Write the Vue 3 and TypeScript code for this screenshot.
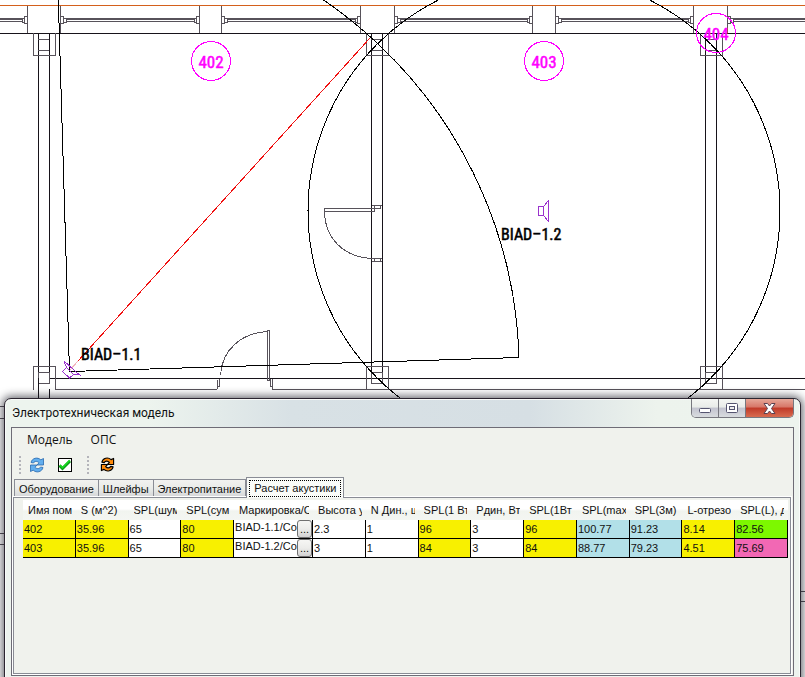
<script setup lang="ts">
import { ref } from 'vue'

type Tone = 'yellow' | 'white' | 'blue' | 'green' | 'pink'
interface Column { title: string; tone: Tone; wide?: boolean }

const menus = ['Модель', 'ОПС']
const tabs = ['Оборудование', 'Шлейфы', 'Электропитание', 'Расчет акустики']
const activeTab = ref(3)

const columns: Column[] = [
  { title: 'Имя пом', tone: 'yellow' },
  { title: 'S (м^2)', tone: 'yellow' },
  { title: 'SPL(шум', tone: 'white' },
  { title: 'SPL(сум', tone: 'yellow' },
  { title: 'Маркировка/С', tone: 'white', wide: true },
  { title: 'Высота у', tone: 'white' },
  { title: 'N Дин., ш', tone: 'white' },
  { title: 'SPL(1 Вт', tone: 'yellow' },
  { title: 'Pдин, Вт', tone: 'white' },
  { title: 'SPL(1Вт', tone: 'yellow' },
  { title: 'SPL(max', tone: 'blue' },
  { title: 'SPL(3м)', tone: 'blue' },
  { title: 'L-отрезо', tone: 'yellow' },
  { title: 'SPL(L), д', tone: 'green' },
]

const rows: string[][] = [
  ['402', '35.96', '65', '80', 'BIAD-1.1/Со', '2.3', '1', '96', '3', '96', '100.77', '91.23', '8.14', '82.56'],
  ['403', '35.96', '65', '80', 'BIAD-1.2/Со', '3', '1', '84', '3', '84', '88.77', '79.23', '4.51', '75.69'],
]

const REQUIRED_LEVEL = 80
function tone(col: number, value: string): Tone {
  if (col === columns.length - 1) return Number(value) >= REQUIRED_LEVEL ? 'green' : 'pink'
  return columns[col].tone
}

/* Floor plan geometry */
const glazing: [number, number][] = [[-112, 27], [60, 199], [221, 360], [394, 532], [555, 693], [727, 866]]
const walls = [38, 371, 705]
const rooms = [
  { name: '402', x: 211, y: 61 },
  { name: '403', x: 544, y: 61 },
  { name: '404', x: 716, y: 33 },
]
</script>

<template>
  <main class="desktop">
    <svg class="plan" viewBox="0 0 805 677" preserveAspectRatio="xMinYMin slice" role="img" aria-label="План помещений">
      <g class="wall-lines">
        <path class="orange" d="M0 5.5H805" />
        <path class="dark" d="M0 33.5H805M49 378.5H805" />
        <path d="M55 389.5H217M272 389.5H805M0 406.5H8M0 418.5H8M0 533.5H8M0 544.5H8M801 591.5H805M801 601.5H805" />
        <g v-for="[a, b] in glazing" :key="a">
          <path :d="`M${a + .5} 6V33M${b + .5} 6V33`" />
          <path class="pane" :d="`M${a + 6} 19H${b - 5}`" />
          <path :d="`M${a + 6} 21.5H${b - 5}M${a + 1} 16.5h2.5v7h-2.5M${a + 4} 18.5h2v4h-2M${b} 16.5h-2.5v7h2.5M${b - 3} 18.5h-2v4h2`" />
        </g>
        <g v-for="x in walls" :key="x">
          <path class="dark" :d="`M${x + .5} 33V378M${x + 11.5} 33V378`" />
          <path :d="`M${x - 4.5} 33V55.5h22V33M${x} 39.5h11M${x} 50.5h11M${x - 4.5} 389.5v-23h22v23M${x + .5} 372.5h11v11h-11z`" />
        </g>
        <path class="dark" d="M38.500 378V400M49.500 389V400" />
        <path d="M324.500 208.500H374.500V211.500H324.500zM372 205.500H382M374.500 205.500V208.500H380.500V205.500M372 258.500H382M374.500 258.500V261.500H380.500V258.500M372 261.500H382M324.500 211.500C325 238 343 257 372 258.500" />
        <path d="M267.500 330.500H269.500V380H267.500zM267.500 331.500C241 333 222 350 220.500 375M217.500 389V379.500M217.500 386.500H219.500V379M272.500 389V379M272.500 386.500H270.500V379" />
      </g>
      <path class="red-line" d="M370 38L78 361" />
      <path class="pink-line" d="M78 361L70 370" />
      <g class="coverage">
        <circle cx="544" cy="211" r="236" />
        <path d="M56 -78L69.500 371.500L519.500 357.500M56 -78A449 449 0 0 1 519 357" />
      </g>
      <g class="speaker">
        <path d="M538.500 206.500h5v9h-5zM543.500 206.500L548.500 200.500V221.500L543.500 215.500" />
        <path d="M62.500 371.500L66.500 367.500L73.500 374.500L69.500 378zM64 361L66.500 367.500M64 361L79.500 375L73.500 374.500" />
      </g>
      <g v-for="room in rooms" :key="room.name" class="room">
        <circle :cx="room.x" :cy="room.y" r="19.500" />
        <text :x="room.x" :y="room.y + 7">{{ room.name }}</text>
      </g>
      <text class="mark" x="81" y="360">BIAD–1.1</text>
      <text class="mark" x="501" y="240">BIAD–1.2</text>
    </svg>

    <section class="window" aria-labelledby="window-title">
      <header class="titlebar">
        <h1 id="window-title">Электротехническая модель</h1>
        <div class="window-buttons">
          <button type="button" class="min" aria-label="Свернуть">
            <svg width="13" height="7" viewBox="0 0 13 7"><rect x=".5" y="1.500" width="11" height="4" rx="1" fill="#fff" stroke="#555570" /></svg>
          </button>
          <button type="button" class="max" aria-label="Развернуть">
            <svg width="12" height="10" viewBox="0 0 12 10"><rect x=".5" y=".5" width="11" height="9" rx="1" fill="#fff" stroke="#555570" /><rect x="3.500" y="3.500" width="5" height="3" fill="#eee" stroke="#555570" /></svg>
          </button>
          <button type="button" class="close" aria-label="Закрыть">
            <svg width="13" height="11" viewBox="0 0 13 11"><path d="M1 .5h3.500l2 2.500 2-2.500H12L8.500 5.500 12 10.500H8.500L6.500 8l-2 2.500H1L4.500 5.500z" fill="#fff" stroke="#5b4150" /></svg>
          </button>
        </div>
      </header>

      <div class="client">
        <nav class="menu">
          <button v-for="m in menus" :key="m" type="button">{{ m }}</button>
        </nav>

        <div class="toolbar" role="toolbar">
          <span class="grip"></span>
          <button type="button" aria-label="Обновить">
            <svg width="16" height="16" viewBox="0 0 16 16" fill="#62aeee" stroke="#2868ad" stroke-width=".8" stroke-linejoin="round">
              <path d="M2 5.500C3 1 8.500-.3 11.800 2.800L14.500 1.500V8H8L10 5.800C8.300 3.800 5.500 4 4.500 6z" />
              <path d="M14 10.500C13 15 7.500 16.300 4.200 13.200L1.500 14.500V8H8L6 10.200C7.700 12.200 10.500 12 11.500 10z" />
            </svg>
          </button>
          <button type="button" aria-label="Проверить">
            <svg width="14" height="14" viewBox="0 0 14 14"><rect x=".5" y=".5" width="13" height="13" fill="#fff" stroke="#000" /><path d="M1.500 7.500L4.500 10.500L12 3" fill="none" stroke="#0a9a18" stroke-width="3" /><path d="M2 7L4.500 9.700L11.800 2.300" fill="none" stroke="#18dc20" stroke-width="1.500" /></svg>
          </button>
          <span class="grip"></span>
          <button type="button" aria-label="Пересчитать">
            <svg width="15" height="15" viewBox="0 0 16 16" fill="#ff8a0a" stroke="#000" stroke-width="1.200" stroke-linejoin="round">
              <path d="M2 5.500C3 1 8.500-.3 11.800 2.800L14.500 1.500V8H8L10 5.800C8.300 3.800 5.500 4 4.500 6z" />
              <path d="M14 10.500C13 15 7.500 16.300 4.200 13.200L1.500 14.500V8H8L6 10.200C7.700 12.200 10.500 12 11.500 10z" />
            </svg>
          </button>
        </div>

        <div class="tabs" role="tablist">
          <button
            v-for="(t, i) in tabs" :key="t" type="button" role="tab"
            :class="{ active: i === activeTab }" :aria-selected="i === activeTab"
            @click="activeTab = i"
          ><span>{{ t }}</span></button>
        </div>

        <div class="page" role="tabpanel">
          <table>
            <colgroup>
              <col v-for="c in columns" :key="c.title" :class="{ wide: c.wide }" />
            </colgroup>
            <thead>
              <tr><th v-for="c in columns" :key="c.title" scope="col"><div>{{ c.title }}</div></th></tr>
            </thead>
            <tbody>
              <tr v-for="row in rows" :key="row[0]">
                <td v-for="(value, i) in row" :key="i" :class="tone(i, value)">
                  <div v-if="columns[i].wide" class="picker">
                    <span>{{ value }}</span>
                    <button type="button" aria-label="Выбрать">...</button>
                  </div>
                  <template v-else>{{ value }}</template>
                </td>
              </tr>
            </tbody>
          </table>
        </div>
      </div>
    </section>
  </main>
</template>

<style>
body { margin: 0; background: #fff; }
</style>

<style scoped>
* { box-sizing: border-box; }
.desktop {
  position: relative;
  height: 100vh;
  overflow: hidden;
  font-family: "Liberation Sans", Arial, sans-serif;
  font-size: 11px;
  color: #111;
}
button { margin: 0; padding: 0; border: 0; background: none; font: inherit; color: inherit; }

.plan { display: block; width: 100%; height: 100%; }
.wall-lines, .red-line, .pink-line, .coverage, .speaker, .room circle { fill: none; stroke-width: 1; shape-rendering: crispEdges; }
.wall-lines { stroke: #57525a; }
.wall-lines .dark { stroke: #17131a; }
.wall-lines .orange { stroke: #d4601c; }
.wall-lines .pane { stroke-width: 2; }
.red-line { stroke: #f01010; }
.pink-line { stroke: #f2b5bd; }
.coverage { stroke: #000; }
.speaker { stroke: #9a32cd; }
.room circle { stroke: #f0f; }
.room text, .mark { font-family: "Roboto Condensed", "Open Sans Condensed", "Noto Sans Condensed", "Liberation Sans", sans-serif; }
.room text { fill: #f0f; stroke: #f0f; stroke-width: .5; font-size: 17px; text-anchor: middle; }
.mark { fill: #000; stroke: #000; stroke-width: .5; font-size: 16px; }

.window {
  position: absolute;
  top: 398px;
  left: 4px;
  right: 4px;
  bottom: -8px;
  display: flex;
  flex-direction: column;
  padding: 0 6px 8px;
  border: 1px solid #2b2530;
  border-radius: 7px 7px 0 0;
  background: linear-gradient(90deg, #edf4ee 0%, #edf4ee 18%, #d8e1e5 36%, #d6dfe4 66%, #edf3ed 82%, #edf4ee 100%) top / 100% 28px no-repeat #edf3ee;
  box-shadow: inset 0 0 0 1px #f9fbf9, 0 0 9px 2px rgba(25, 25, 35, .65);
}
.titlebar { display: flex; justify-content: space-between; height: 28px; }
.titlebar h1 {
  margin: 0;
  padding-left: 1px;
  font: 400 12px/28px Roboto, sans-serif;
}
.window-buttons {
  display: flex;
  height: 19px;
  border: 1px solid #77777f;
  border-top: 0;
  border-radius: 0 0 5px 5px;
  overflow: hidden;
}
.window-buttons button {
  display: grid;
  place-items: center;
  width: 27px;
  background: linear-gradient(#f4f6f3 0%, #e9ece9 45%, #c2c3cf 50%, #d9dcdf 100%);
  border-right: 1px solid #77777f;
}
.window-buttons .min { padding-top: 4px; }
.window-buttons .close {
  width: 47px;
  border-right: 0;
  background: linear-gradient(#e6a798 0%, #d77667 45%, #c03a28 50%, #d86c50 100%);
}

.client {
  flex: 1;
  display: flex;
  flex-direction: column;
  padding: 0 2px 1px 1px;
  border: 1px solid #6e6c76;
  background: #f0f2ed;
}
.menu { display: flex; gap: 18px; height: 24px; padding-left: 14px; font: 12px/24px "Open Sans", sans-serif; }
.toolbar { display: flex; align-items: center; height: 25px; padding-left: 6px; }
.toolbar button { display: grid; place-items: center; width: 28px; height: 24px; }
.toolbar button:first-of-type { margin-left: 2px; }
.grip {
  width: 2px;
  height: 18px;
  background: repeating-linear-gradient(#b4b4ba 0 2px, transparent 2px 4px);
}
.toolbar .grip:not(:first-child) { margin: 0 4px 0 8px; }

.tabs { display: flex; align-items: flex-end; height: 20px; padding-left: 1px; }
.tabs button {
  height: 18px;
  padding: 0 4px;
  border: 1px solid #898c95;
  border-width: 1px 1px 0 0;
  background: linear-gradient(#f2f2f0 0%, #e9ebe8 50%, #d5d6d8 100%);
  line-height: 18px;
}
.tabs button:first-child { border-left-width: 1px; }
.tabs .active {
  position: relative;
  height: 21px;
  margin-bottom: -1px;
  padding: 2px;
  border-left-width: 1px;
  background: #fafcf9;
  line-height: 14px;
}
.tabs .active span { display: block; height: 17px; padding: 0 4px; border: 1px dotted #000; }

.page {
  flex: 1;
  padding: 2px 2px 8px 9px;
  border: 1px solid #898c95;
  background: #f0f2ed;
  box-shadow: 0 0 0 1px #fff;
}
table { width: 100%; table-layout: fixed; border-collapse: separate; border-spacing: 0; }
col.wide { width: 79px; }
th {
  height: 20px;
  padding: 0 4px 0 5px;
  background: linear-gradient(#fff 0%, #fff 45%, #f1f4ef 55%, #f4f6f2 100%);
  font-weight: 400;
  line-height: 19px;
  text-align: left;
}
th div { overflow: hidden; white-space: nowrap; }
td {
  height: 19px;
  padding: 0 1px;
  border-right: 1px solid #000;
  border-bottom: 1px solid #000;
  line-height: 18px;
  white-space: nowrap;
}
.yellow { background: #f8f000; }
.white { background: #fff; }
.blue { background: #b2e0e8; }
.green { background: #7df800; }
.pink { background: #f268b4; }
.picker { display: flex; justify-content: space-between; height: 18px; margin-right: -1px; }
.picker span { flex: 1; min-width: 0; overflow: hidden; line-height: 15px; }
.picker button {
  width: 15px;
  height: 18px;
  border: 1px solid #707070;
  border-radius: 3px;
  background: linear-gradient(#f6f6f4 0%, #ececea 50%, #d2d2d2 100%);
  line-height: 16px;
}
</style>
